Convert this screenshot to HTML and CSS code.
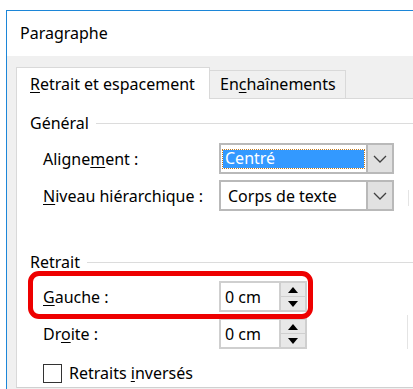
FILE: index.html
```html
<!DOCTYPE html>
<html lang="fr">
<head>
<meta charset="utf-8">
<link rel="stylesheet" href="styles.css">
</head>
<body>
<div class="window">
  <div class="title">Paragraphe</div>
  <div class="body">
    <div class="tabs">
      <div class="tab active"><u>R</u>etrait et espacement</div>
      <div class="tab">En<u>c</u>haînements</div>
    </div>
    <div class="panel">
      <div class="group"><span class="glabel">Général</span><span class="gline"></span></div>
      <div class="row r-align">
        <span class="label">Aligne<u>m</u>ent :</span>
        <div class="combo">
          <div class="cfield"><span class="sel">Centré</span></div>
          <div class="cbtn"><svg width="14" height="8" viewBox="0 0 14 8"><path d="M1 1 L7 7 L13 1" fill="none" stroke="#404040" stroke-width="1.3"/></svg></div>
        </div>
      </div>
      <div class="row r-level">
        <span class="label"><u>N</u>iveau hiérarchique :</span>
        <div class="combo">
          <div class="cfield"><span class="val">Corps de texte</span></div>
          <div class="cbtn"><svg width="14" height="8" viewBox="0 0 14 8"><path d="M1 1 L7 7 L13 1" fill="none" stroke="#404040" stroke-width="1.3"/></svg></div>
        </div>
      </div>
      <div class="group g2"><span class="glabel">Retrait</span><span class="gline"></span></div>
      <div class="row r-left">
        <span class="label"><u>G</u>auche :</span>
        <div class="spin">
          <div class="sfield">0 cm</div>
          <div class="sbtns">
            <div class="sb"><svg width="10" height="6" viewBox="0 0 10 6"><path d="M0 6 L5 0 L10 6 Z" fill="#000"/></svg></div>
            <div class="sb"><svg width="10" height="6" viewBox="0 0 10 6"><path d="M0 0 L5 6 L10 0 Z" fill="#000"/></svg></div>
          </div>
        </div>
      </div>
      <div class="row r-right">
        <span class="label">Dr<u>o</u>ite :</span>
        <div class="spin">
          <div class="sfield">0 cm</div>
          <div class="sbtns">
            <div class="sb"><svg width="10" height="6" viewBox="0 0 10 6"><path d="M0 6 L5 0 L10 6 Z" fill="#000"/></svg></div>
            <div class="sb"><svg width="10" height="6" viewBox="0 0 10 6"><path d="M0 0 L5 6 L10 0 Z" fill="#000"/></svg></div>
          </div>
        </div>
      </div>
      <div class="check-row">
        <span class="box"></span>
        <span class="clabel">Retraits <u>i</u>nversés</span>
      </div>
      <div class="highlight"></div>
      <div class="edge e1"></div>
      <div class="edge e2"></div>
    </div>
  </div>
</div>
</body>
</html>
```
FILE: styles.css
```css
html, body {
  margin: 0;
  padding: 0;
  background: #fff;
  overflow: hidden;
}
body {
  width: 413px;
  height: 389px;
  font-family: "Noto Sans", "Open Sans", sans-serif;
  font-size: 16px;
  line-height: 20px;
  color: #000;
}
u { text-decoration: underline; text-underline-offset: 2px; }
.window {
  margin: 10px 0 0 6px;
  border-top: 1px solid #1c86d8;
  border-left: 1px solid #1c86d8;
  height: 378px;
  overflow: hidden;
}
.title {
  height: 45px;
  padding-left: 13px;
  font-size: 16px;
  line-height: 45px;
  background: #fff;
}
.body {
  background: #f0f0f0;
  padding: 11px 0 0 9px;
  height: 322px;
}
.tabs {
  display: flex;
  align-items: flex-end;
  height: 32px;
  position: relative;
  z-index: 1;
}
.tab {
  box-sizing: border-box;
  border: 1px solid #d9d9d9;
  border-bottom: none;
  padding-left: 13px;
}
.tab.active {
  width: 194px;
  height: 32px;
  line-height: 32px;
  background: #fff;
}
.tab:not(.active) {
  width: 137px;
  height: 29px;
  line-height: 27px;
  padding-left: 10px;
  border-bottom: 1px solid #d9d9d9;
  margin-left: -1px;
}
.panel {
  position: relative;
  margin-top: -1px;
  background: #fff;
  border-top: 1px solid #d9d9d9;
  border-left: 1px solid #d9d9d9;
  border-bottom: 1px solid #d0d0d0;
  height: 288px;
  padding-left: 13px;
}
.group {
  display: flex;
  align-items: center;
  height: 24px;
  margin-top: 12px;
}
.group.g2 { margin-top: 39px; }
.gline {
  flex: 1;
  height: 1px;
  background: #dcdcdc;
  margin-left: 7px;
}
.row {
  display: flex;
  align-items: center;
  padding-left: 13px;
}
.label {
  width: 176px;
}
.combo {
  display: flex;
  width: 175px;
  height: 31px;
  box-sizing: border-box;
  border: 2px solid #b9b9b9;
  background: #fff;
}
.r-align { margin-top: 8px; }
.r-level { margin-top: 6px; }
.cfield {
  flex: 1;
  display: flex;
  align-items: center;
  padding: 0 2px;
}
.sel {
  display: block;
  width: 100%;
  height: 18px;
  line-height: 17px;
  background: #3399ff;
  color: #fff;
  outline: 1px dotted #c07a22;
  padding-left: 2px;
  box-sizing: border-box;
}
.val { padding-left: 5px; }
.cbtn {
  width: 24px;
  background: #e1e1e1;
  border-left: 2px solid #b9b9b9;
  display: flex;
  align-items: center;
  justify-content: center;
}
.r-left { margin-top: 7px; }
.r-right { margin-top: 6px; }
.spin {
  display: flex;
  width: 88px;
  height: 31px;
  box-sizing: border-box;
  border: 2px solid #cfcfcf;
  background: #fff;
}
.sfield {
  flex: 1;
  display: flex;
  align-items: center;
  padding-left: 4px;
}
.sbtns {
  width: 24px;
  display: flex;
  flex-direction: column;
  border-left: 2px solid #cfcfcf;
}
.sb {
  flex: 1;
  background: #e8e8e8;
  display: flex;
  align-items: center;
  justify-content: center;
}
.sb + .sb { border-top: 1px solid #cfcfcf; }
.check-row {
  display: flex;
  align-items: center;
  padding-left: 13px;
  margin-top: 14px;
}
.box {
  width: 19px;
  height: 19px;
  box-sizing: border-box;
  border: 1px solid #333;
  background: #fff;
}
.clabel { margin-left: 7px; }
.highlight {
  position: absolute;
  left: 11px;
  top: 172px;
  width: 285px;
  height: 48px;
  box-sizing: border-box;
  border: 5px solid #ee0000;
  border-radius: 11px;
}
.edge {
  position: absolute;
  width: 1px;
  background: #e4e4e4;
}
.e1 { left: 391px; top: 91px; height: 16px; }
.e2 { left: 390px; top: 216px; height: 34px; }
```
